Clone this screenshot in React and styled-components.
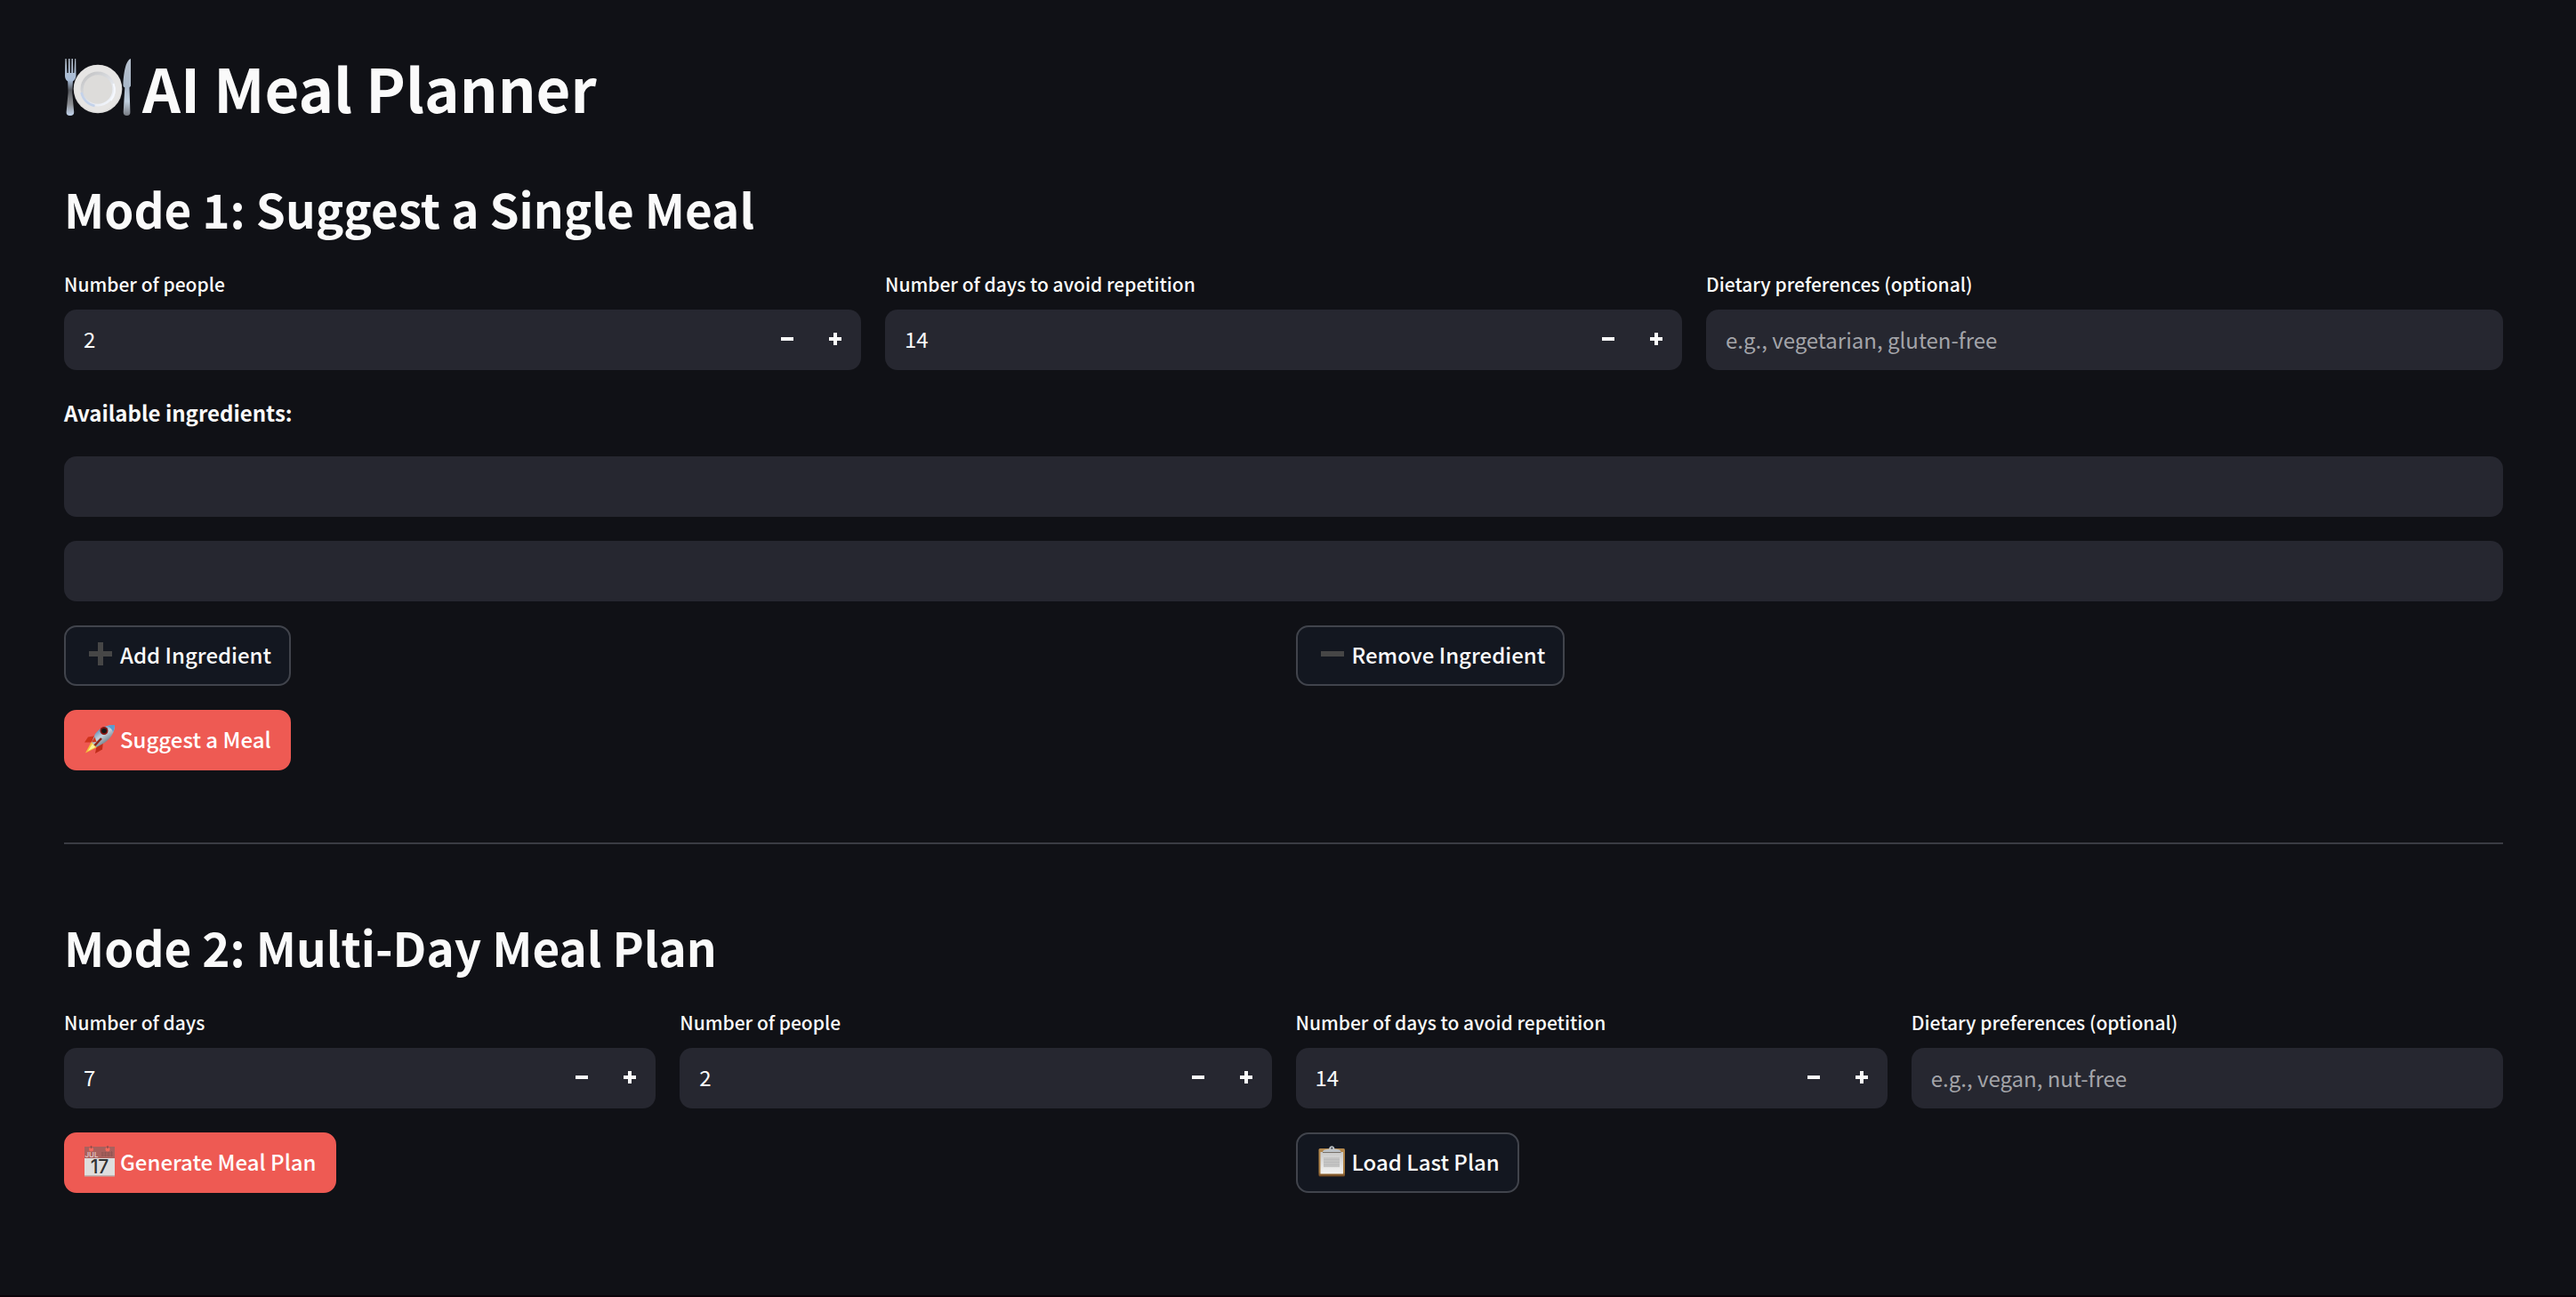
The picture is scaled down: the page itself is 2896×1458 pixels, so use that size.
import React, { useId, useState } from "react";
import styled, { createGlobalStyle, css } from "styled-components";

const Global = createGlobalStyle`
  *, *::before, *::after { box-sizing: border-box; }
  html { background: #101116; }
  body {
    margin: 0;
    background: #101116;
    color: #fafafa;
    font-family: "Noto Sans CJK JP", "Noto Sans", sans-serif;
    font-size: 24px;
    line-height: 44px;
  }
`;

const Page = styled.main`
  display: flex;
  flex-direction: column;
  min-height: 100vh;
  padding: 46px 82px 46px 72px;
  border-bottom: 2px solid #0b0309;
`;

const Title = styled.h1`
  display: flex;
  align-items: center;
  gap: 12px;
  margin: 0;
  font-size: 67px;
  font-weight: 700;
  line-height: 104px;
`;

const Section = styled.section`
  display: flex;
  flex-direction: column;
  gap: 27px;
`;

const Heading = styled.h2`
  margin: 0;
  padding-top: 44px;
  font-size: 53px;
  font-weight: 600;
  line-height: 80px;
`;

const Columns = styled.div`
  display: grid;
  grid-template-columns: repeat(${(p) => p.$count}, minmax(0, 1fr));
  gap: 27px;
`;

const Field = styled.div`
  display: flex;
  flex-direction: column;
  gap: 11px;
`;

const Label = styled.label`
  font-size: 21px;
  font-weight: 500;
  line-height: 36px;
`;

const box = css`
  height: 68px;
  border: 0;
  border-radius: 14px;
  background: #262730;
  color: #fafafa;
`;

const TextInput = styled.input`
  ${box}
  width: 100%;
  padding: 0 22px 2px;
  font: inherit;
  outline-color: #ff4b4b;
  &::placeholder { color: #a3a4a9; opacity: 1; }
`;

const NumberBox = styled.div`
  ${box}
  display: flex;
  padding-right: 2px;
  overflow: hidden;
`;

const NumberInput = styled.input`
  flex: 1;
  min-width: 0;
  padding: 0 22px 2px;
  border: 0;
  background: transparent;
  color: inherit;
  font: inherit;
  appearance: textfield;
  outline-color: #ff4b4b;
  &::-webkit-inner-spin-button { appearance: none; margin: 0; }
`;

const Step = styled.button`
  display: grid;
  place-items: center;
  width: 54px;
  padding: 0;
  border: 0;
  background: transparent;
  color: #fafafa;
  cursor: pointer;
`;

const Caption = styled.p`
  margin: 0;
  padding-bottom: 1px;
  font-weight: 700;
  line-height: 42px;
`;

const Button = styled.button`
  display: inline-flex;
  align-items: center;
  justify-self: start;
  align-self: flex-start;
  gap: 6px;
  height: 68px;
  padding: 0 20px 2px 21px;
  border: 2px solid ${(p) => (p.$primary ? "#ee5a53" : "#41444c")};
  border-radius: 14px;
  background: ${(p) => (p.$primary ? "#ee5a53" : "#131720")};
  color: ${(p) => (p.$primary ? "#ffffff" : "#fafafa")};
  font: inherit;
  font-weight: 500;
  white-space: nowrap;
  cursor: pointer;
`;

const Divider = styled.hr`
  width: 100%;
  height: 2px;
  margin: 81px 0 31px;
  border: 0;
  background: #3a3c43;
`;

const Icon = styled.svg`
  flex: none;
  display: block;
`;

function PlateIcon() {
  return (
    <Icon width="76" height="76" viewBox="0 0 76 76" aria-hidden="true">
      <defs>
        <linearGradient id="steel" x1="0" y1="0" x2="0" y2="1">
          <stop offset="0" stopColor="#b9c4d1" />
          <stop offset="0.38" stopColor="#a9bdd8" />
          <stop offset="0.55" stopColor="#55585e" />
          <stop offset="0.8" stopColor="#8d8f93" />
          <stop offset="1" stopColor="#c3d5ee" />
        </linearGradient>
        <linearGradient id="blade" x1="0" y1="0" x2="0" y2="1">
          <stop offset="0" stopColor="#b8c2ce" />
          <stop offset="0.5" stopColor="#a9b8ca" />
          <stop offset="0.75" stopColor="#c0cfdf" />
          <stop offset="1" stopColor="#777b82" />
        </linearGradient>
        <linearGradient id="well" x1="0" y1="0" x2="0.8" y2="1">
          <stop offset="0" stopColor="#bdbdbd" />
          <stop offset="0.6" stopColor="#dfe2e7" />
          <stop offset="1" stopColor="#f4f8ff" />
        </linearGradient>
      </defs>
      <path d="M1.4 6h1.2l.8 16h1.4l.3-16h1.4l.3 16h1.4l.3-16h1.4l.3 16h1.2l.8-16h1l.3 19c0 3-1.6 5-3.6 6.6L9.2 44l2 22c.1 2.600-1.400 4-4.400 4s-4.300-1.400-4.200-4l2-22-.4-12.400C2 30 1 28 1 25z" fill="url(#steel)" />
      <circle cx="38" cy="40" r="27.300" fill="#dedddc" />
      <circle cx="38" cy="39.500" r="26.300" fill="#e6e5e4" />
      <circle cx="38" cy="40" r="19.500" fill="url(#well)" />
      <circle cx="38" cy="40.500" r="16.300" fill="#dddcda" />
      <path d="M19.500 44a19 19 0 0 0 15 15" fill="none" stroke="#c3d2ea" strokeWidth="2.500" />
      <path d="M55.500 34a19 19 0 0 1-3 19" fill="none" stroke="#f6f9ff" strokeWidth="2" />
      <path d="M75 6v30.500l-1.500 2 .9 27.500c.1 2.700-1.200 4-3.800 4s-4-1.300-3.900-4l1.600-27.500c-1.800-.7-2-2-1.800-4C67 23 69 8 75 6z" fill="url(#blade)" />
    </Icon>
  );
}

function PlusEmoji() {
  return (
    <Icon width="34" height="34" viewBox="0 0 34 34" aria-hidden="true">
      <path d="M15 3h6v10h10v6H21v10h-6V19H5v-6h10z" fill="#464646" />
    </Icon>
  );
}

function MinusEmoji() {
  return (
    <Icon width="34" height="34" viewBox="0 0 34 34" aria-hidden="true">
      <path d="M5 13h26v6H5z" fill="#464646" />
    </Icon>
  );
}

function RocketEmoji() {
  return (
    <Icon width="34" height="34" viewBox="0 0 34 34" aria-hidden="true">
      <defs>
        <linearGradient id="hull" x1="0.2" y1="0.1" x2="0.8" y2="0.9">
          <stop offset="0" stopColor="#3f78ad" />
          <stop offset="0.45" stopColor="#c3d0da" />
          <stop offset="0.7" stopColor="#8f9ba6" />
          <stop offset="1" stopColor="#4a4f57" />
        </linearGradient>
      </defs>
      <path d="M13 13 4 14.500 0 20.500l11 0z" fill="#cf331c" />
      <path d="M21 20 20 28.500 12 33l2-11z" fill="#c02d1a" />
      <path d="M8 19.500 1 32.500 14 26z" fill="#f5c23a" />
      <path d="M9 22 4 30l8-4z" fill="#fdf29a" />
      <path d="M34 1C25 .5 17 4 12 11L8 20.500 13.500 26l9-5C29.500 16 34 9.500 34 1z" fill="url(#hull)" />
      <path d="M34 1c-3-.2-6 .2-8.500 1.200C28.500 3 31 5.500 32 9 33.500 6.500 34 4 34 1z" fill="#5b9bd0" />
      <circle cx="22" cy="7.500" r="4.500" fill="#8a1713" />
      <circle cx="22" cy="7.500" r="2.800" fill="#171717" />
      <path d="m8 20.500 3.500-6 2 5.500z" fill="#d03a1e" />
      <path d="m11.500 24 7.500-8" stroke="#8d2418" strokeWidth="2.500" />
    </Icon>
  );
}

const IconText = styled.text`
  font-family: Inter, "Liberation Sans", sans-serif;
  font-size: ${(p) => p.$size}px;
  text-anchor: middle;
`;

function CalendarEmoji() {
  return (
    <Icon width="34" height="36" viewBox="0 0 34 36" aria-hidden="true">
      <path d="M0 1h34v13H0z" fill="#a9605d" />
      <path d="M0 14h34v20H0z" fill="#dededd" />
      <path d="M0 33h34v1.500H0z" fill="#bdb5b3" />
      <circle cx="7.500" cy="4" r="2.500" fill="#f5685c" />
      <circle cx="26" cy="4" r="2.500" fill="#f5685c" />
      <path d="M7.500 0v3M26 0v3" stroke="#8e4c49" strokeWidth="1.500" />
      <IconText $size={8} x="8" y="13" fill="#e4cfcd">JUL</IconText>
      <path d="M19 8h13M19 10.500h13M20 7v5M23.500 7v5M27 7v5M30.500 6v6" stroke="#8d5350" strokeWidth="0.800" />
      <IconText $size={21} x="17" y="31" fill="#333333">17</IconText>
    </Icon>
  );
}

function ClipboardEmoji() {
  return (
    <Icon width="34" height="36" viewBox="0 0 34 36" aria-hidden="true">
      <defs>
        <linearGradient id="board" x1="0" y1="0" x2="0" y2="1">
          <stop offset="0" stopColor="#b5894d" />
          <stop offset="0.850" stopColor="#a87c42" />
          <stop offset="1" stopColor="#6d4722" />
        </linearGradient>
        <linearGradient id="paper" x1="0" y1="0" x2="0" y2="1">
          <stop offset="0" stopColor="#c9c9c8" />
          <stop offset="1" stopColor="#f4f4f3" />
        </linearGradient>
      </defs>
      <rect x="2.500" y="3" width="29.500" height="31.500" rx="1.500" fill="url(#board)" />
      <path d="M4.500 7h25.500V31.500h-25.500z" fill="url(#paper)" />
      <path d="M8 13h18v11H8z" fill="#c4c4c3" />
      <path d="M8 15.500h18M8 18.500h18M8 21.500h18" stroke="#b6b6b5" strokeWidth="0.600" />
      <path d="M7 7.500c0-3 3-3.500 7-3.700C14.500 1 15.700.3 17.300.3s2.700.7 3.300 3.500c4 .2 7 .7 7 3.700z" fill="#bfc4c8" />
      <path d="M7 7.500h20.500" stroke="#77716a" />
      <circle cx="17.300" cy="2.800" r="1" fill="#3d424c" />
    </Icon>
  );
}

function NumberField({ label, initial }) {
  const id = useId();
  const [value, setValue] = useState(initial);
  return (
    <Field>
      <Label htmlFor={id}>{label}</Label>
      <NumberBox>
        <NumberInput id={id} type="number" value={value} onChange={(e) => setValue(Number(e.target.value))} />
        <Step type="button" aria-label={`Decrease ${label}`} onClick={() => setValue(value - 1)}>
          <Icon width="14" height="16" viewBox="0 0 14 16" aria-hidden="true">
            <path d="M0 5h14v4H0z" fill="currentColor" />
          </Icon>
        </Step>
        <Step type="button" aria-label={`Increase ${label}`} onClick={() => setValue(value + 1)}>
          <Icon width="14" height="16" viewBox="0 0 14 16" aria-hidden="true">
            <path d="M5 0h4v5h5v4H9v5H5V9H0V5h5z" fill="currentColor" />
          </Icon>
        </Step>
      </NumberBox>
    </Field>
  );
}

function TextField({ label, placeholder }) {
  const id = useId();
  return (
    <Field>
      <Label htmlFor={id}>{label}</Label>
      <TextInput id={id} type="text" placeholder={placeholder} />
    </Field>
  );
}

export default function App() {
  const [ingredients, setIngredients] = useState(["", ""]);
  const edit = (index, text) => setIngredients(ingredients.map((item, i) => (i === index ? text : item)));

  return (
    <>
      <Global />
      <Page>
        <Title>
          <PlateIcon />
          AI Meal Planner
        </Title>

        <Section>
          <Heading>Mode 1: Suggest a Single Meal</Heading>
          <Columns $count={3}>
            <NumberField label="Number of people" initial={2} />
            <NumberField label="Number of days to avoid repetition" initial={14} />
            <TextField label="Dietary preferences (optional)" placeholder="e.g., vegetarian, gluten-free" />
          </Columns>
          <Caption>Available ingredients:</Caption>
          {ingredients.map((item, i) => (
            <TextInput
              key={i}
              type="text"
              aria-label={`Ingredient ${i + 1}`}
              value={item}
              onChange={(e) => edit(i, e.target.value)}
            />
          ))}
          <Columns $count={2}>
            <Button type="button" onClick={() => setIngredients([...ingredients, ""])}>
              <PlusEmoji />
              Add Ingredient
            </Button>
            <Button type="button" onClick={() => setIngredients(ingredients.slice(0, -1))}>
              <MinusEmoji />
              Remove Ingredient
            </Button>
          </Columns>
          <Button type="button" $primary>
            <RocketEmoji />
            Suggest a Meal
          </Button>
        </Section>

        <Divider />

        <Section>
          <Heading>Mode 2: Multi-Day Meal Plan</Heading>
          <Columns $count={4}>
            <NumberField label="Number of days" initial={7} />
            <NumberField label="Number of people" initial={2} />
            <NumberField label="Number of days to avoid repetition" initial={14} />
            <TextField label="Dietary preferences (optional)" placeholder="e.g., vegan, nut-free" />
          </Columns>
          <Columns $count={2}>
            <Button type="button" $primary>
              <CalendarEmoji />
              Generate Meal Plan
            </Button>
            <Button type="button">
              <ClipboardEmoji />
              Load Last Plan
            </Button>
          </Columns>
        </Section>
      </Page>
    </>
  );
}
